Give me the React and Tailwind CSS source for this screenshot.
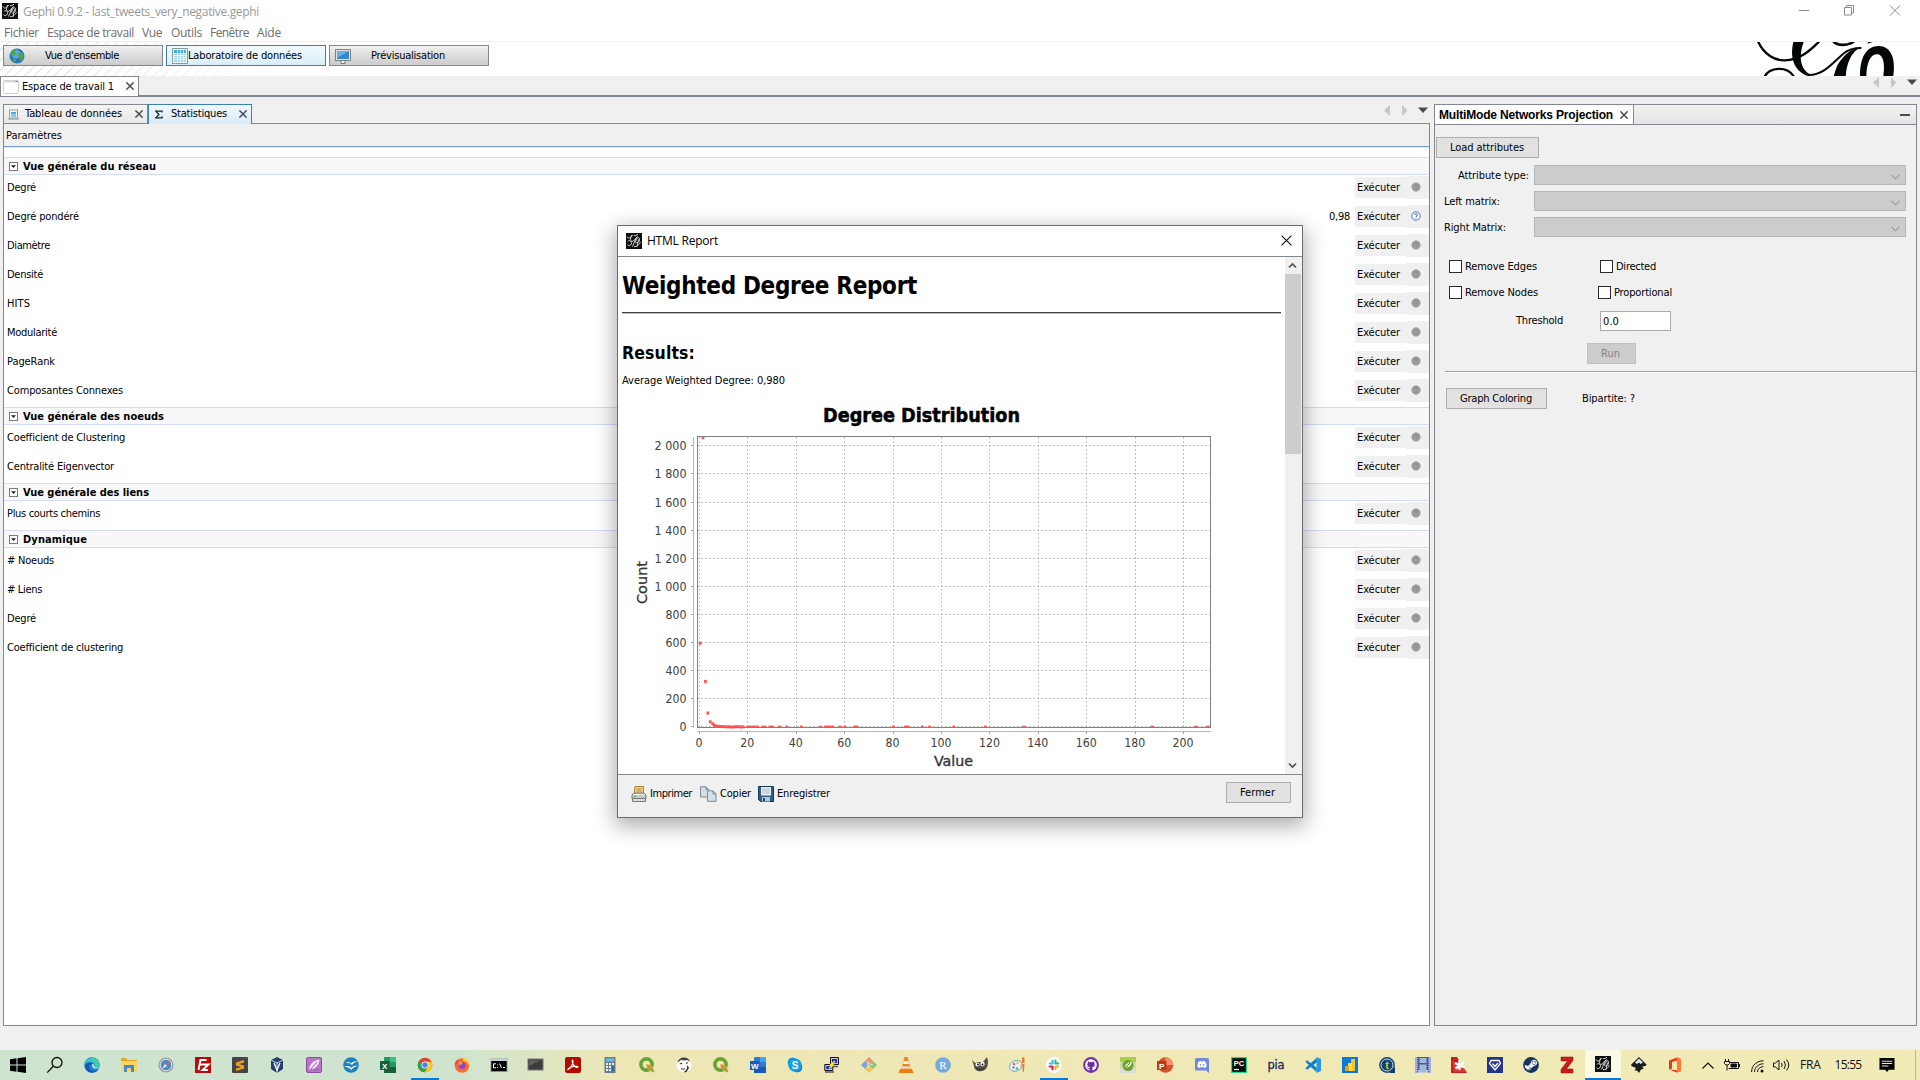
import React, { useLayoutEffect, useRef } from "react";
import { FaGithub, FaSteamSymbol, FaDiscord } from "react-icons/fa";

const TAHOMA = "font-['DejaVu_Sans_Condensed','DejaVu_Sans',sans-serif] [font-stretch:condensed]";
const SEGOE = "font-['Open_Sans',sans-serif] [font-stretch:normal]";

/* Single-line label spread evenly over a given width. */
function Label({ w, children, className = "" }) {
  const ref = useRef(null);
  useLayoutEffect(() => {
    const el = ref.current;
    const fit = () => {
      el.style.letterSpacing = "0px";
      const natural = el.getBoundingClientRect().width;
      el.style.letterSpacing = `${(w - natural) / children.length}px`;
    };
    fit();
    document.fonts?.ready.then(fit);
  }, [w, children]);
  return (
    <span ref={ref} className={`inline-block shrink-0 whitespace-pre ${className}`}>
      {children}
    </span>
  );
}

function GephiIcon({ size = 16 }) {
  return (
    <svg width={size} height={size} viewBox="0 0 16 16" className="shrink-0">
      <rect width="16" height="16" fill="#0d0f10" />
      <g fill="none" stroke="#e8e8e8" strokeWidth="0.9">
        <path d="M1 3.5C2 6 5 5.500 6.500 2M5.500 2C4 6 4.500 8.500 6 8.500 8 8.500 9 5 11.500 4M2 8.500C3 6.500 5 8 5.500 9.500 6 12 2.500 14 1.500 11.500" />
        <path d="M11.500 3.500C9 5 8.500 10 6.500 13.500M9.500 9C10.500 4 14 3.500 13.500 7 13 10 10.500 10.500 9.500 9.500M12.500 6.500L11 13.500M8 13.500C11 14.500 13.500 11 14.500 9M8 2.500C9.500 3.500 10.500 1.500 12 1.500" />
      </g>
    </svg>
  );
}

function Cross({ size = 8, color = "#4b4b4b", stroke = 1.5 }) {
  return (
    <svg width={size} height={size} viewBox="0 0 8 8" className="block shrink-0">
      <path d="M.4.4L7.600 7.600M7.600.4L.4 7.600" stroke={color} strokeWidth={(stroke * 8) / size} fill="none" />
    </svg>
  );
}

function TabArrows() {
  return (
    <svg width="44" height="11" viewBox="0 0 44 11" className="shrink-0">
      <path d="M6 0v11L0 5.500zM18 0v11l5.500-5.500z" fill="#c6c6c6" />
      <path d="M34 2.500h10l-5 5.500z" fill="#4b4b4b" />
    </svg>
  );
}

/* ---------- window header ---------- */
function WindowControls() {
  return (
    <svg width="102" height="11" viewBox="0 0 102 11" fill="none" stroke="#8a8a8a">
      <path d="M0 5.500h10M45.500 2.500h7v7.500h-7zM47.500 2.500V.5h7v7.500h-2M91 .5l10 10M101 .5l-10 10" />
    </svg>
  );
}

const MENU = [
  ["Fichier", 35, "ml-[4px]"],
  ["Espace de travail", 87, "ml-[8px]"],
  ["Vue", 20, "ml-[8px]"],
  ["Outils", 31, "ml-[9px]"],
  ["Fenêtre", 39, "ml-[8px]"],
  ["Aide", 24, "ml-[8px]"],
];

function Header() {
  return (
    <>
      <div className={`flex h-[22px] items-start justify-between bg-white pl-[2px] pr-[19px] text-[12px] text-[#999] ${SEGOE}`}>
        <div className="flex items-start pt-[3px]">
          <GephiIcon />
          <Label w={236} className="ml-[5px] mt-px leading-[16px]">Gephi 0.9.2 - last_tweets_very_negative.gephi</Label>
        </div>
        <div className="pt-[5px]">
          <WindowControls />
        </div>
      </div>
      <div className={`flex h-[20px] items-start border-b border-[#f0f0f0] bg-white pt-px text-[12px] leading-[20px] text-[#6d6d6d] ${SEGOE}`}>
        {MENU.map(([t, w, m]) => (
          <Label key={t} w={w} className={m}>{t}</Label>
        ))}
      </div>
    </>
  );
}

function Globe() {
  return (
    <svg width="16" height="16" viewBox="0 0 16 16" className="shrink-0">
      <circle cx="8" cy="8" r="7.500" fill="#2a78bd" />
      <circle cx="7" cy="6" r="4.500" fill="#5aa9de" />
      <path d="M2 4C4 1 7 .6 8 1L6 4 7 6 4.500 8 2 6zM9 6l4-2 2 4-2 5-2-1-.5-3L9 8zM4 9l3 1 0 2-2 3-1-2z" fill="#4fa24b" />
    </svg>
  );
}
function TableIcon() {
  return (
    <svg width="16" height="16" viewBox="0 0 16 16" className="shrink-0">
      <rect x=".5" y=".5" width="15" height="15" fill="#f3f7f8" stroke="#8c9a9d" />
      <rect x="2" y="2" width="12" height="12" fill="#9fd6ee" />
      <rect x="2" y="2" width="12" height="3" fill="#35b1e3" />
      <path d="M2 5.500h12M2 7.500h12M2 9.500h12M2 11.500h12M5.500 2v12M8.500 2v12M11.500 2v12" stroke="#fff" strokeWidth=".7" />
    </svg>
  );
}
function SmallTableIcon() {
  return (
    <svg width="11" height="11" viewBox="0 0 11 11" className="shrink-0">
      <rect x="1.500" y="1" width="8" height="8" fill="#f7f7f7" stroke="#9a9ea0" />
      <rect x="3" y="3" width="5" height="5" fill="#86c8e8" />
      <path d="M3 3h5v1.500H3z" fill="#3aa6dc" />
      <path d="M0 10h11" stroke="#8b8f92" />
    </svg>
  );
}
function MonitorIcon() {
  return (
    <svg width="16" height="16" viewBox="0 0 16 16" className="shrink-0">
      <rect x=".5" y="1.500" width="15" height="11" fill="#dfe3e6" stroke="#7d858b" />
      <rect x="2" y="3" width="12" height="8" fill="#3587cc" />
      <path d="M2 3h12L2 10z" fill="#68b0e6" />
      <path d="M6 13v2.500h4V13" fill="#eee" stroke="#777" />
    </svg>
  );
}

function GephiWordmark() {
  return (
    <svg width="180" height="34" viewBox="0 0 540 102" className="block shrink-0" fill="#040707">
      <g fill="none" stroke="#040707">
        <path d="M54 -2C72 38 105 56 134 55C180 54 212 24 238 -2" strokeWidth="7" />
        <path d="M74 104C88 76 140 70 162 104" strokeWidth="7" />
        <path d="M204 99C250 100 275 65 310 35C325 22 345 18 364 18" strokeWidth="6" />
        <path d="M280 -2C292 12 326 12 342 -2" strokeWidth="8" />
      </g>
      <path d="M160 0h31C172 52 186 88 214 98L204 102C158 86 150 42 160 0z" />
      <path d="M366 16C345 20 322 48 317 102H281C290 78 290 70 300 58C318 32 342 16 366 16z" />
      <path d="M360 102C360 48 378 12 416 12C452 12 468 48 460 102H430C436 60 428 36 410 37C388 38 380 70 379 102z" />
      <path d="M383 5L398 0H384z" />
    </svg>
  );
}

function Toolbar() {
  const base = "flex h-[21px] w-[160px] items-center border text-[11px] text-black";
  const grey = "border-[#828790] bg-linear-to-b from-[#f2f2f2] via-[#dcdcdc] to-[#cccccc]";
  return (
    <div className={`flex h-[34px] bg-white ${TAHOMA}`}>
      <div className="flex h-full w-[330px] shrink-0 items-start gap-[3px] bg-[linear-gradient(to_right,transparent,#fff),repeating-linear-gradient(135deg,#fff_0px,#fff_5.6px,#d2d2d2_6.3px,#fff_7px)] pl-[3px] pt-[3px]">
        <div className={`${base} ${grey} shrink-0 pl-[5px]`}>
          <Globe />
          <Label w={74} className="ml-[20px] pt-px">Vue d'ensemble</Label>
        </div>
        <div className={`${base} shrink-0 border-[#3c7fb1] bg-linear-to-b from-[#f2fafe] to-[#d9eef8] pl-[5px]`}>
          <TableIcon />
          <Label w={114} className="pt-px">Laboratoire de données</Label>
        </div>
        <div className={`${base} ${grey} shrink-0 pl-[5px]`}>
          <MonitorIcon />
          <Label w={74} className="ml-[20px] pt-px">Prévisualisation</Label>
        </div>
      </div>
      <div className="ml-auto">
        <GephiWordmark />
      </div>
    </div>
  );
}

function WorkspaceTabs() {
  return (
    <div className={`flex h-[21px] ${TAHOMA} text-[11px]`}>
      <div className="flex w-[139px] shrink-0 items-center border border-[#828790] bg-white pl-[2px]">
        <svg width="16" height="14" viewBox="0 0 16 14" className="shrink-0">
          <rect x=".5" y=".5" width="15" height="13" rx="1" fill="#fdfdfd" stroke="#cfcfcf" />
          <path d="M1 1h14v1.500H1z" fill="#ded9d7" />
          <path d="M12.500 1h2v1h-2z" fill="#c66" />
        </svg>
        <Label w={92} className="ml-[3px] pt-px">Espace de travail 1</Label>
        <span className="mb-px ml-[12px]"><Cross /></span>
      </div>
      <div className="flex flex-1 items-start justify-end border-b-2 border-[#828790] pr-[3px] pt-px">
        <TabArrows />
      </div>
    </div>
  );
}

/* ---------- statistics panel ---------- */
const SECTIONS = [
  {
    title: ["Vue générale du réseau", 133],
    rows: [["Degré", 29], ["Degré pondéré", 72, "0,98"], ["Diamètre", 43], ["Densité", 36], ["HITS", 23], ["Modularité", 50], ["PageRank", 48], ["Composantes Connexes", 116]],
  },
  { title: ["Vue générale des noeuds", 141], rows: [["Coefficient de Clustering", 118], ["Centralité Eigenvector", 107]] },
  { title: ["Vue générale des liens", 126], rows: [["Plus courts chemins", 93]] },
  { title: ["Dynamique", 64], rows: [["# Noeuds", 47], ["# Liens", 35], ["Degré", 29], ["Coefficient de clustering", 116]] },
];

function HelpDot({ active }) {
  return (
    <svg width="10" height="10" viewBox="0 0 10 10">
      <circle cx="5" cy="5" r="4.200" fill={active ? "#fff" : "#9c9c9c"} stroke={active ? "#4560d8" : "#9c9c9c"} strokeWidth={active ? 0.9 : 0.8} />
      <path d="M3.600 4C3.600 2.300 6.400 2.300 6.400 3.900 6.400 4.800 5 4.900 5 6M5 6.700V7.700" fill="none" stroke={active ? "#3550d0" : "#8c8c8c"} strokeWidth="1" />
    </svg>
  );
}

function StatSection({ title, rows }) {
  return (
    <section>
      <div className="flex h-[18px] items-center border-y border-[#d4dcf7] bg-[#f8f8f8] pl-[5px] text-[11px] font-bold">
        <svg width="9" height="9" viewBox="0 0 9 9" className="shrink-0">
          <rect x=".5" y=".5" width="8" height="8" fill="#fff" stroke="#7a7a7a" />
          <path d="M2 3.300h5L4.500 6z" fill="#222" />
        </svg>
        <Label w={title[1]} className="ml-[5px] pt-[2px] leading-[16px]">{title[0]}</Label>
      </div>
      {rows.map(([name, w, value], i) => (
        <div key={i} className="flex h-[29px] items-start pl-[3px] pt-px text-[11px] leading-[23px]">
          <Label w={w}>{name}</Label>
          <div className="ml-auto flex">
            {value && <Label w={21} className="mr-[5px]">{value}</Label>}
            <div className="mt-px h-[21px] w-[51px] bg-[#f0f0f0] pl-[2px] leading-[21px]">
              <Label w={43}>Exécuter</Label>
            </div>
            <div className="flex h-[23px] w-[23px] items-center bg-[#f0f0f0] pb-px pl-[5px]">
              <HelpDot active={!!value} />
            </div>
          </div>
        </div>
      ))}
    </section>
  );
}

function StatisticsPanel() {
  return (
    <div className={`ml-[3px] flex h-[922px] w-[1427px] shrink-0 flex-col text-[11px] ${TAHOMA}`}>
      <div className="flex h-[20px] shrink-0">
        <div className="flex w-[145px] items-center border border-[#828790] bg-linear-to-b from-[#f5f5f5] to-[#e8e8e8] pl-[4px]">
          <SmallTableIcon />
          <Label w={97} className="ml-[6px] pt-px">Tableau de données</Label>
          <span className="mb-px ml-[13px]"><Cross /></span>
        </div>
        <div className="flex w-[104px] items-center border border-b-0 border-[#3c7fb1] bg-linear-to-b from-[#f0f8ff] to-[#d9eafa] pl-[6px]">
          <svg width="8" height="9" viewBox="0 0 9 9" className="shrink-0">
            <path d="M8 2.300V.8H1L4.500 4.500 1 8.200H8V6.500" fill="none" stroke="#222" strokeWidth="1.400" />
          </svg>
          <Label w={56} className="ml-[8px]">Statistiques</Label>
          <span className="mb-[2px] ml-[12px]"><Cross /></span>
        </div>
        <div className="flex flex-1 items-start justify-end border-b border-[#828790] pr-[2px] pt-px">
          <TabArrows />
        </div>
      </div>
      <div className="flex flex-1 flex-col border border-t-0 border-[#828790] bg-white">
        <div className="h-[23px] border-b border-[#7a9dc2] bg-[#f0f0f0] pl-[2px] pt-px leading-[22px]">
          <Label w={56}>Paramètres</Label>
        </div>
        <div className="mb-[9px] h-px bg-[#e0e6f8]" />
        {SECTIONS.map((s) => (
          <StatSection key={s.title[0]} {...s} />
        ))}
      </div>
    </div>
  );
}

/* ---------- projection panel ---------- */
function Combo() {
  return (
    <div className="flex h-[20px] w-[372px] items-center justify-end border border-[#b4b4b4] bg-[#cccccc] pr-[5px]">
      <svg width="9" height="6" viewBox="0 0 9 6" className="mt-[3px]" fill="none" stroke="#a0a0a0" strokeWidth="1.200">
        <path d="M.5.7L4.500 4.900 8.500.7" />
      </svg>
    </div>
  );
}
function Check({ w, children }) {
  return (
    <div className="flex h-[13px] items-center leading-[13px]">
      <div className="size-[13px] shrink-0 border border-[#2b2b2b] bg-white" />
      <Label w={w} className="ml-[3px]">{children}</Label>
    </div>
  );
}
const BTN = "border border-[#adadad] bg-[#e1e1e1]";

function ProjectionPanel() {
  return (
    <div className={`ml-[4px] flex h-[922px] w-[483px] shrink-0 flex-col border border-[#828790] text-[11px] text-black ${TAHOMA}`}>
      <div className="flex h-[20px] border-b border-[#828790]">
        <div className="flex w-[199px] shrink-0 items-center border-r border-[#828790] bg-white pl-[4px] font-['Liberation_Sans',sans-serif] text-[12px] font-bold">
          <Label w={174} className="pt-px">MultiMode Networks Projection</Label>
          <span className="ml-[7px]"><Cross /></span>
        </div>
        <div className="flex flex-1 items-center justify-end bg-linear-to-b from-[#f3f3f3] to-[#e4e4e4] pr-[6px]">
          <div className="h-[2px] w-[10px] bg-[#4b4b4b]" />
        </div>
      </div>
      <div className={`ml-px mt-[12px] h-[21px] w-[103px] ${BTN} pl-[13px] leading-[19px]`}>
        <Label w={74}>Load attributes</Label>
      </div>
      <div className="mt-[7px] grid grid-cols-[90px_373px] grid-rows-[20px_20px_20px] gap-x-[9px] gap-y-[6px] leading-[20px]">
        <div className="pl-[23px] pt-px"><Label w={71}>Attribute type:</Label></div>
        <Combo />
        <div className="pl-[9px] pt-px"><Label w={56}>Left matrix:</Label></div>
        <Combo />
        <div className="pl-[9px] pt-px"><Label w={62}>Right Matrix:</Label></div>
        <Combo />
      </div>
      <div className="ml-[14px] mt-[23px] flex h-[13px]">
        <div className="w-[151px]"><Check w={72}>Remove Edges</Check></div>
        <Check w={40}>Directed</Check>
      </div>
      <div className="ml-[14px] mt-[13px] flex h-[13px]">
        <div className="w-[149px]"><Check w={73}>Remove Nodes</Check></div>
        <Check w={58}>Proportional</Check>
      </div>
      <div className="ml-[80px] mt-[12px] flex h-[20px] leading-[20px]">
        <div className="w-[85px] pl-px"><Label w={47}>Threshold</Label></div>
        <div className="w-[71px] border border-[#ababab] bg-white pl-[2px] leading-[19px]"><Label w={16}>0.0</Label></div>
      </div>
      <div className="ml-[152px] mt-[12px] h-[21px] w-[49px] border border-[#bfbfbf] bg-[#cccccc] pl-[13px] leading-[19px] text-[#838383]">
        <Label w={19}>Run</Label>
      </div>
      <div className="ml-[10px] mt-[7px] h-[2px] border-b border-t border-b-white border-t-[#a0a0a0]" />
      <div className="ml-[11px] mt-[15px] flex h-[21px]">
        <div className={`w-[101px] ${BTN} pl-[13px] leading-[19px]`}><Label w={72}>Graph Coloring</Label></div>
        <Label w={53} className="ml-[35px] leading-[21px]">Bipartite: ?</Label>
      </div>
    </div>
  );
}

/* ---------- report dialog ---------- */
const POINTS = [
  [0.3, 597], [1.4, 2060], [2.4, 325], [3.4, 100], [4.4, 38], [5.4, 24], [6, 13], [6.500, 8], [7, 6], [8, 5], [9, 4], [10, 4], [11, 2], [12, 2], [13, 1], [14, 1], [15, 3], [16, 3], [17, 1], [18, 2],
  20, 21, 22, 23, 24, 26, 27, 29, 30, 33, 36, 42, 50, 52, 53, 54, 55, 58, 60, 64, 65, 80, 85, 86, 92, 95, 105, 118, 134, 187, 205, 210,
];

function DegreeChart() {
  const px = (v) => 79.400 + v * 2.421;
  const py = (v) => 326.800 - v * 0.1405;
  const col = (v) => Math.floor(px(v)) + 0.5;
  const row = (v) => Math.floor(py(v)) + 0.5;
  const xs = Array.from({ length: 11 }, (_, i) => i * 20);
  const ys = Array.from({ length: 11 }, (_, i) => i * 200);
  const fmt = (v) => (v >= 1000 ? `${Math.floor(v / 1000)} ${String(v % 1000).padStart(3, "0")}` : `${v}`);
  return (
    <svg width="660" height="376" viewBox="0 0 660 376" className={`block ${TAHOMA}`}>
      <text x="203" y="21.500" textLength="197" fontSize="20" fontWeight="700" stroke="#000" strokeWidth=".5" lengthAdjust="spacingAndGlyphs">Degree Distribution</text>
      <g stroke="#c0c0c0" strokeDasharray="2 2" shapeRendering="crispEdges">
        {ys.map((v) => <path key={v} d={`M77 ${row(v)}H590`} />)}
        {xs.map((v) => <path key={v} d={`M${col(v)} 37V328`} />)}
      </g>
      <g fill="#ff5555">
        {POINTS.map((p, i) => {
          const [x, y] = Array.isArray(p) ? p : [p, 0];
          return <rect key={i} x={px(x) - 1.200} y={py(y) - 1.200} width="2.800" height={y > 0 ? 3 : 2} />;
        })}
      </g>
      <rect x="77.500" y="36.500" width="513" height="291" fill="none" stroke="#808080" />
      <path d="M73.500 37V328M77 331.500H591" stroke="#b8b8b8" />
      <g stroke="#a0a0a0">
        {ys.map((v) => <path key={v} d={`M71 ${row(v)}h2`} />)}
        {xs.map((v) => <path key={v} d={`M${col(v)} 332v2`} />)}
      </g>
      <g fontSize="12.500" fill="#404040">
        {ys.map((v) => (
          <text key={v} x="66.500" y={row(v) + 4.500} textAnchor="end" textLength={v >= 1000 ? 32 : v ? 21 : 7} lengthAdjust="spacingAndGlyphs">{fmt(v)}</text>
        ))}
        {xs.map((v) => (
          <text key={v} x={px(v) - 0.5} y="347" textAnchor="middle" textLength={v >= 100 ? 21 : v ? 14 : 7} lengthAdjust="spacingAndGlyphs">{v}</text>
        ))}
      </g>
      <g fontSize="14.500" fill="#333" stroke="#333" strokeWidth=".3">
        <text x="314" y="366" textLength="39" lengthAdjust="spacingAndGlyphs">Value</text>
        <text transform="translate(27 204) rotate(-90)" textLength="43" lengthAdjust="spacingAndGlyphs">Count</text>
      </g>
    </svg>
  );
}

function PrintIcon() {
  return (
    <svg width="16" height="16" viewBox="0 0 16 16" className="shrink-0">
      <path d="M4 .5h8.500v8H3z" fill="#f2cf7a" stroke="#a8823a" />
      <path d="M5.500 3h5M5.500 5h5" stroke="#a8823a" strokeWidth=".8" />
      <path d="M1 9l2-2h10l2 2v3.500H1z" fill="#c9c9c9" stroke="#777" />
      <path d="M2 8.500h12" stroke="#efefef" />
      <path d="M1.500 12.500h13v3h-13z" fill="#dcdcdc" stroke="#777" />
      <path d="M3 10.500h2" stroke="#4db24d" />
    </svg>
  );
}
function CopyIcon() {
  return (
    <svg width="17" height="16" viewBox="0 0 17 16" className="shrink-0" fill="#d5dfe8" stroke="#7b8b99">
      <path d="M.5.8h5.500L8.500 3.500V11H.5z" />
      <path d="M7.500 4.800h5.500l3 3v7.500H7.500z" />
      <path d="M13 5v3h3M6 1v2.500h2.500" fill="none" />
    </svg>
  );
}
function SaveIcon() {
  return (
    <svg width="16" height="16" viewBox="0 0 16 16" className="shrink-0">
      <path d="M.5.5h15v15h-13l-2-2z" fill="#2f5f89" stroke="#17364f" />
      <rect x="3" y="1" width="10" height="8.500" fill="#e9eef2" />
      <path d="M4 3h8M4 5h8M4 7h8" stroke="#9fb0bd" strokeWidth=".8" />
      <rect x="4" y="11" width="8" height="4.500" fill="#b9c7d2" />
      <rect x="5" y="12" width="2" height="3" fill="#23445f" />
    </svg>
  );
}

function ReportDialog() {
  return (
    <div className={`absolute left-[617px] top-[225px] flex h-[593px] w-[686px] flex-col border border-[#6b6b70] bg-[#f0f0f0] text-black shadow-[0_6px_20px_2px_rgba(0,0,0,0.33)] ${TAHOMA}`}>
      <div className={`flex h-[30px] shrink-0 items-center bg-white pb-px pl-[8px] pr-[10px] text-[12px] ${SEGOE}`}>
        <GephiIcon />
        <Label w={71} className="ml-[5px] pt-px">HTML Report</Label>
        <span className="mb-px ml-auto"><Cross size={11} color="#111" stroke={1.1} /></span>
      </div>
      <div className="flex h-[519px] shrink-0 border-y border-[#828790] bg-white">
        <div className="h-[517px] flex-1 pl-[4px]">
          <div className="h-[55px] pt-[14px] text-[24px] font-bold leading-[30px]"><Label w={295}>Weighted Degree Report</Label></div>
          <div className="h-[2px] w-[659px] border-b border-t border-b-[#bdbdbd] border-t-[#404040]" />
          <div className="mt-[27px] h-[25px] text-[17.500px] font-bold leading-[24px]"><Label w={73}>Results:</Label></div>
          <div className="mt-[7px] h-[15px] text-[11px] leading-[16px]"><Label w={163}>Average Weighted Degree: 0,980</Label></div>
          <div className="-ml-[2px] mt-[12px]"><DegreeChart /></div>
        </div>
        <div className="flex w-[17px] shrink-0 flex-col bg-[#f0f0f0] pb-[5px]">
          <svg width="9" height="17" viewBox="0 0 9 17" className="ml-[3px]" fill="none" stroke="#505050" strokeWidth="1.700"><path d="M1 10.500L4.500 7 8 10.500" /></svg>
          <div className="h-[180px] w-[16px] bg-[#cdcdcd]" />
          <svg width="9" height="7" viewBox="0 0 9 7" className="ml-[3px] mt-auto" fill="none" stroke="#505050" strokeWidth="1.700"><path d="M1 1.500L4.500 5 8 1.500" /></svg>
        </div>
      </div>
      <div className="flex h-[42px] items-center pb-[5px] pl-[13px] pr-[11px] text-[11px]">
        <PrintIcon />
        <Label w={42} className="ml-[3px] pt-px">Imprimer</Label>
        <span className="ml-[8px] flex"><CopyIcon /></span>
        <Label w={31} className="ml-[3px] pt-px">Copier</Label>
        <span className="ml-[7px] flex"><SaveIcon /></span>
        <Label w={53} className="ml-[3px] pt-px">Enregistrer</Label>
        <div className={`mb-[3px] ml-auto h-[21px] w-[65px] ${BTN} pl-[13px] leading-[19px]`}><Label w={35}>Fermer</Label></div>
      </div>
    </div>
  );
}

/* ---------- taskbar ---------- */
function Glyph({ x = 8, y = 12, size = 10, fill = "#fff", children, bold = true }) {
  return (
    <text x={x} y={y} fontSize={size} fill={fill} textAnchor="middle" fontWeight={bold ? 700 : 400} fontFamily="Liberation Sans, sans-serif">
      {children}
    </text>
  );
}
const qgis = (
  <>
    <circle cx="7.500" cy="7.500" r="5.600" fill="none" stroke="#68a336" strokeWidth="3.600" />
    <path d="M7 7l3 .2L15.500 13l-2.500 2.500L7.500 10z" fill="#eb7f33" stroke="#f4eeb6" strokeWidth=".5" />
    <path d="M11 11l4 4" stroke="#7db343" strokeWidth="1.500" />
  </>
);
const officeTile = (dark, mid, light, letter) => (
  <>
    <rect x="4" y="0" width="12" height="16" rx="1" fill={mid} />
    <rect x="10" y="0" width="6" height="5" fill={light} />
    <rect x="4" y="10" width="12" height="6" fill={dark} />
    <rect x="0" y="4" width="9.500" height="9" fill={dark} />
    <Glyph x={4.700} y={11.500} size={8}>{letter}</Glyph>
  </>
);

const APPS = [
  ["start", <path d="M0 2.200L6.500 1.300V7.500H0zM7.500 1.200L16 0V7.500H7.500zM0 8.500H6.500V14.700L0 13.800zM7.500 8.500H16V16L7.500 14.800z" fill="#000" />],
  ["search", <g fill="none" stroke="#111" strokeWidth="1.300"><circle cx="10" cy="5.500" r="5" /><path d="M6.300 9.200L.2 15.600" /></g>],
  ["edge", <><circle cx="8" cy="8" r="7.800" fill="#1b83d2" /><path d="M.5 7C2 0 14-2 15.800 7c0 4-5 4-5.300 2.500C12 5 5 3 .5 7z" fill="#3fcbb0" /><path d="M5 9c0 5 5 6 9 4-4 5-13 2.500-13-4C3 5 8 5 8 7 6 7 5 8 5 9z" fill="#1458a8" /><path d="M8 7c3 0 2 2.500 2.500 3 2 1 4 .5 5-1-.5 3-6 3.500-7 1z" fill="#d2e4cc" /></>],
  ["files", <><path d="M0 1h5l1.500 2H16v11H0z" fill="#e5a61e" /><path d="M0 4h16v10H0z" fill="#fcd462" /><path d="M3 15V8h10v7h-3v-4H6v4z" fill="#3d8dd6" /></>],
  ["safari", <><circle cx="8" cy="8" r="7.500" fill="#9a9da0" /><circle cx="8" cy="8" r="5.800" fill="#4c8cc8" stroke="#dfe7ee" /><path d="M12 4L9 9 7 7z" fill="#e55" /><path d="M4 12l3-5 2 2z" fill="#eee" /></>],
  ["filezilla", <><rect width="16" height="16" fill="#b50d0d" /><path d="M3.500 13L5.500 3H11.500M4.500 7.500H8.500M7.500 7.500H13.500L7.500 13H13" fill="none" stroke="#fff" strokeWidth="1.900" /></>],
  ["sublime", <><rect width="16" height="16" rx="1" fill="#454545" /><path d="M12 3L4 5.500v3l5 1.500-5 1.500V14l8-2.500v-3L7 7l5-1.500z" fill="#f79b1c" /></>],
  ["virtualbox", <><path d="M8 0l6 3v9l-6 4-6-4V3z" fill="#23406b" /><path d="M2 3l6 3 6-3M8 6v10" stroke="#c9dbe9" fill="none" /><path d="M5 6l3 7 3-7" stroke="#fff" fill="none" strokeWidth="1.300" /></>],
  ["quill", <><rect x=".5" y=".5" width="15" height="15" rx="1.500" fill="#b477c4" stroke="#8c4c9e" /><path d="M3 14C3 8 7 3 13.500 2.500 13 8 9 12.500 5 12z" fill="#f3e5f6" /><path d="M3 14L11 5M8 13.500l5-1" stroke="#9a55ab" /></>],
  ["openoffice", <><circle cx="8" cy="8" r="7.800" fill="#1c83bd" /><path d="M2 6c3-2 5-1 6 .5C10 4.500 12 4 14.500 5 12 5 10 6 9 8 7 6 5 5.500 2 6zM1 10c4-2 6-1 7 1 2-2 4-2.500 7-2-3 .6-5 1.600-7 4-1-2.500-4-3.500-7-3z" fill="#fff" /></>],
  ["excel", officeTile("#17603a", "#219a60", "#38c481", "X")],
  ["chrome", <><circle cx="8" cy="8" r="7.300" fill="#e34133" /><path d="M8 8L1.600 4.500A7.300 7.300 0 0 0 7.500 15.300L11 9.500z" fill="#2da24f" /><path d="M8 8l3.500 1.500L7.500 15.300A7.300 7.300 0 0 0 14.500 4.700H8z" fill="#fbc915" /><circle cx="8" cy="8" r="3.500" fill="#fff" /><circle cx="8" cy="8" r="2.700" fill="#4285f4" /></>],
  ["firefox", <><circle cx="8" cy="8.500" r="7.300" fill="#fb6b2b" /><path d="M9 0c3 1 7 4 6.300 9.500C14 5 11 4 9 4z" fill="#ffd53b" /><path d="M.7 8C1 4 3 3 4 3l1 3z" fill="#ff3a52" /><circle cx="8" cy="8.500" r="3.500" fill="#8a46d0" /><path d="M4 5l5 .5-1.500 2L5 8z" fill="#ffa62b" /></>],
  ["cmd", <><rect y="2" width="16" height="12.500" fill="#000" stroke="#8b959e" strokeWidth=".8" /><path d="M0 2h16v2H0z" fill="#c5ced6" /><path d="M5 6.800H2.500v4H5M6.700 7.500v1M6.700 10v1M8.500 6.500l2 4.500M12 10.500h2" stroke="#fff" fill="none" /></>],
  ["terminal", <><rect y="2" width="15" height="11" fill="#3c3c3e" stroke="#777" /><path d="M1 3h13L1 9z" fill="#555" /><path d="M2 5h4M2 7h2" stroke="#999" strokeWidth=".6" /></>],
  ["acrobat", <><rect width="16" height="16" rx="2" fill="#b30b00" /><path d="M3 12.500C6 11 8 7 8 4.500 8 2 6.500 3 7.500 6c1 2.500 3 4.500 5 4.500 2-1-2-2-6-.5-3 1-4.500 3-3.500 2.500z" stroke="#fff" strokeWidth="1.100" fill="none" /></>],
  ["calculator", <><rect x="2.500" width="11" height="16" fill="#6e7c85" /><rect x="4" y="1.500" width="8" height="3" fill="#5fc4ea" /><path d="M4 7h2M7 7h2M10 7h2M4 10h2M7 10h2M4 13h2M7 13h2" stroke="#e9eef1" strokeWidth="1.800" /><path d="M10 9h2v5h-2z" fill="#1f6fb0" /></>],
  ["qgis", qgis],
  ["dbeaver", <><circle cx="8" cy="8" r="7.500" fill="#fbfaf6" /><path d="M1.500 5.500C2 2.500 5 .5 8 .5S13 2 14 4.500L11 3 8.500 3.500 5 3z" fill="#4a413b" /><path d="M3.500 6.500l2-.8 1 .8-1.500 1zM9.500 6l2-.8.8.8-1.500.8zM11.500 8l1.500 3-2.500 4-3 .4 3-2.900z" fill="#3a322d" /><path d="M5 11.500c1.500 1 3 1 4 0" fill="none" stroke="#3a322d" /></>],
  ["qgis-2", qgis],
  ["word", officeTile("#185abd", "#2b7cd3", "#41a5ee", "W")],
  ["skype", <><rect x=".8" y=".8" width="10" height="10" rx="4.500" fill="#1592df" /><rect x="5.200" y="5.200" width="10" height="10" rx="4.500" fill="#0f7fd0" /><circle cx="8" cy="8" r="6.600" fill="#169fe6" /><Glyph y={11.500}>S</Glyph></>],
  ["putty", <><path d="M6.500.5h8v7h-8zM.8 7.500h8v6h-8z" fill="#c9c9c9" stroke="#111" /><path d="M8 2h5v4H8zM2.300 9h5v3h-5z" fill="#1b28b8" /><path d="M8 9.500h6M1 15h9" stroke="#555" strokeWidth="1.500" /><path d="M11 4L7 7.500l2 .5-4 3.500" stroke="#ffe81a" fill="none" strokeWidth="1.600" /></>],
  ["slicer", <g opacity=".9"><path d="M8 0l4 4-4 4-4-4z" fill="#e98a6d" /><path d="M4 4l4 4-4 4-4-4z" fill="#6f9fe0" /><path d="M12 4l4 4-4 4-4-4z" fill="#7cbd70" /><path d="M8 8l4 4-4 4-4-4z" fill="#f3c24f" /><path d="M7 4v7M8.500 6.500L12 8.500" stroke="#f7f3e0" /></g>],
  ["vlc", <><path d="M2 12h12l1.500 4H.5z" fill="#ee7a12" /><path d="M6.500 0h3L13 13H3z" fill="#f58220" /><path d="M5.700 4h4.600l.8 3H4.900zM4.200 9.500h7.600l.5 2H3.700z" fill="#f4f4f0" /></>],
  ["r", <><circle cx="8" cy="8" r="7.800" fill="#75aadb" /><text x="8" y="12" fontSize="11" fill="#fff" textAnchor="middle" fontFamily="Liberation Serif, serif">R</text></>],
  ["gimp", <><path d="M0 3l3 3c3-2 6 0 8-1l4-5 1 4c0 5-1 9-6 10-4 1-8-1-8-5z" fill="#56524a" /><circle cx="5.500" cy="7.500" r="2" fill="#fff" /><circle cx="10.500" cy="7" r="2.200" fill="#fff" /><circle cx="6" cy="7.500" r=".9" /><circle cx="10.500" cy="7.500" r=".9" /><path d="M4 11c3 2 6 2 8 0" stroke="#222" fill="none" /></>],
  ["paint", <><path d="M1 8c1-4 8-6 11-3 2 2-1 3 0 5s-4 5-8 4-4-4-3-6z" fill="#e8f1f6" stroke="#6aa0bf" /><circle cx="5" cy="7" r="1.200" fill="#e55" /><circle cx="8.500" cy="6" r="1.200" fill="#f5b82e" /><circle cx="4.500" cy="10.500" r="1.200" fill="#3a9bdc" /><circle cx="8" cy="11.500" r="1.200" fill="#55b24b" /><path d="M13 6V1l1-1 1.500 1v5zM13 7h2.500l-.7 8h-1z" fill="#e57f2a" /></>],
  ["slack", <><circle cx="8" cy="8" r="7.900" fill="#fff" /><g strokeWidth="2.200" strokeLinecap="round"><path d="M6.500 3.500v3M3.700 6.500h2.500" stroke="#36c5f0" /><path d="M9.500 3.700v2.800M9.500 6.500H12.300" stroke="#2eb67d" /><path d="M9.500 9.500v2.800M9.500 9.500H12.300" stroke="#ecb22e" /><path d="M3.700 9.500h2.800M6.500 9.500V12.300" stroke="#e01e5a" /></g></>],
  ["github", <><circle cx="8" cy="8" r="7.900" fill="#6f2da8" /><FaGithub x="2" y="2" size={12} color="#fff" /></>],
  ["camtasia", <><rect width="16" height="16" fill="#c9dba9" /><rect width="16" height="5" fill="#a8cf45" /><rect y="11" width="16" height="5" fill="#dcdcd8" /><circle cx="8" cy="8.500" r="5.500" fill="#6fa030" /><path d="M5 10c0-3.500 4-4.500 7-5.500-1 6-4 6.500-7 5.500z" fill="#dff0bd" /><path d="M6 10l4-4" stroke="#5c8a26" /></>],
  ["powerpoint", <><circle cx="8.500" cy="8" r="7.700" fill="#d35230" /><path d="M8.500.3a7.700 7.700 0 0 1 7.700 7.700H8.500z" fill="#ff8f6b" /><rect y="4" width="9.500" height="9" fill="#b83b1d" /><Glyph x={4.700} y={11.500} size={8}>P</Glyph></>],
  ["discord", <><path d="M1 2.500Q1 1 3 1h10q2 0 2 1.500V16l-3-2.500H3q-2 0-2-1.500z" fill="#7289da" /><FaDiscord x="3" y="2.500" size={10} color="#fff" /></>],
  ["pycharm", <><rect x=".6" y=".6" width="14.800" height="14.800" fill="#0b0b0b" stroke="#21d789" strokeWidth="1.200" /><Glyph x={8} y={8.500} size={7.500}>PC</Glyph><path d="M3 12.500h5" stroke="#fff" strokeWidth="1.200" /></>],
  ["pia", <text x="8" y="12" fontSize="11.500" textAnchor="middle" fill="#25285e" stroke="#25285e" strokeWidth=".3" fontFamily="DejaVu Sans, sans-serif" textLength="17">pia</text>],
  ["vscode", <><path d="M11.500 0L16 2v12l-4.500 2z" fill="#1f9cf0" /><path d="M11.500 1v4.500L2 12.800.3 11.200z" fill="#0b7bc4" /><path d="M11.500 15v-4.500L2 3.200.3 4.800z" fill="#0d82cf" /></>],
  ["powerbi", <><rect width="16" height="16" fill="#0f78d4" /><path d="M9 2h4v12H9z" fill="#f5c52c" /><path d="M6 6h4v8H6z" fill="#f9d859" /><path d="M3 9h4v5H3z" fill="#e0a71a" /></>],
  ["t-app", <><circle cx="8" cy="8" r="7.900" fill="#123f72" /><path d="M10 16h6v-6z" fill="#123f72" /><circle cx="8" cy="8" r="6" fill="none" stroke="#fff" strokeWidth=".8" /><Glyph y={12} size={11} fill="#b9d53a">t</Glyph></>],
  ["film", <><path d="M0 0h4v16H0zM12 0h4v16h-4z" fill="#a9a9ea" /><path d="M3 0h10v13H3z" fill="#4c5d84" /><path d="M4.500 1h7v5h-7zM4.500 7.500h7v8h-7z" fill="#9fb9dc" /><path d="M2.500 0v16M13.500 0v16" stroke="#5a5f88" strokeDasharray="1 1" /></>],
  ["asterisk", <><path d="M0 0h6l10 16H0z" fill="#c42020" /><path d="M1 3l15 12H3z" fill="#d93838" /><path d="M8.500 3v10M4 6l9 4.500M13 5.500L4.500 11.500" stroke="#fff" strokeWidth="2.300" /></>],
  ["vpn", <><rect width="16" height="16" fill="#22358a" /><path d="M4 3.500h8l1.500 3L8 13 2.500 6.500zM5.500 6.500L8 9.500l3-3.500" fill="none" stroke="#fff" strokeWidth="1.300" /></>],
  ["steam", <><circle cx="8" cy="8" r="7.900" fill="#17355f" /><FaSteamSymbol x="1" y="1" size={14} color="#f3f5f7" /></>],
  ["zotero", <path d="M2 0h12v3.500L7.500 12H14v4H2v-3.500L8.500 4H2z" fill="#c81a20" stroke="#8d1216" strokeWidth=".5" />],
  ["gephi", null],
  ["inkscape", <><path d="M8 0L15.500 7.500C16 9 12 9 11 10l2 1.500-3 1L8 16l-2-2.500H3.500L5 11 .3 9V7.500z" fill="#1c1c1e" /><path d="M8 1.500L12 5.500 9.500 7 8 5.500 6 7 4 5.500z" fill="#d9e3ee" /></>],
  ["office", <><path d="M2 3.500L10 .5 14 2v12l-4 1.500L2 12.500l8 .7V3.500L5 5v6.500L2 12.500z" fill="#e23c17" /><path d="M10 .5L14 2v12l-4 1.500z" fill="#ff7a33" /></>],
];
const RUNNING = { chrome: "border-b-2 border-[#0a78d6]", slack: "border-b-2 border-[#0a78d6]" };

function Taskbar() {
  return (
    <div className="flex h-[30px] items-center bg-linear-to-r from-[#cfe4ce] from-24% via-[#ece7b5] via-32% to-[#f1ebb6]">
      {APPS.map(([name, art], i) => (
        <div
          key={name}
          className={`flex h-[30px] shrink-0 items-center justify-center ${i > 0 && i < 38 ? "w-[37px]" : "w-[36px]"} ${name === "gephi" ? "border-b-2 border-[#0a78d6] bg-[#fbf9e6] pt-[2px]" : ""}`}
        >
          <div className={`flex h-[30px] items-center justify-center ${name === "gephi" ? "w-full pb-[2px]" : "w-[28px]"} ${RUNNING[name] ? RUNNING[name] + " pt-[2px]" : ""}`}>
            {art ? <svg width="16" height="16" viewBox="0 0 16 16" overflow="visible">{art}</svg> : <GephiIcon />}
          </div>
        </div>
      ))}
      <div className={`ml-[9px] flex h-full flex-1 items-center text-[12px] text-[#111] ${SEGOE}`}>
        <svg width="12" height="7" viewBox="0 0 12 7" fill="none" stroke="#111" strokeWidth="1.200" className="shrink-0"><path d="M.5 6.500L6 1l5.500 5.500" /></svg>
        <svg width="16" height="12" viewBox="0 0 16 12" className="ml-[10px] shrink-0" fill="none" stroke="#111"><path d="M5 3.500h9.500v6H4.500M15.500 5v3M1.500 0v2.500M4.500 0v2.500M.5 2.500h5v2L4 6H2L.5 4.500zM3 6v5.500" /><path d="M7 5h5.500v3H7z" fill="#111" /></svg>
        <svg width="13" height="13" viewBox="0 0 13 13" className="ml-[11px] mt-[2px] shrink-0" fill="none" stroke="#111"><path d="M.6 12C.6 5 6 .8 12.500.8M3.500 12C3.500 7 8 3.800 12.500 3.800M6.500 12C6.500 9 9 6.700 12.500 6.700" /><circle cx="11" cy="11" r="1.500" fill="#111" stroke="none" /></svg>
        <svg width="17" height="14" viewBox="0 0 17 14" className="ml-[9px] shrink-0" fill="none" stroke="#111"><path d="M.5 5h2L6 2v10L2.500 9h-2zM8.500 5q1.500 2 0 4M11 3q3 4 0 8M13.500 1.500q4.500 5.500 0 11" /></svg>
        <Label w={20.500} className="ml-[10px]">FRA</Label>
        <Label w={27} className="ml-[14px]">15:55</Label>
        <svg width="16" height="16" viewBox="0 0 17 16" className="ml-[17px] shrink-0"><path d="M.5.5h16V13h-6L8.500 15.500 6.500 13h-6z" fill="#000" /><path d="M3 4h11M3 6.500h11M3 9h7" stroke="#f1ebb6" strokeWidth="1.100" /></svg>
        <div className="ml-auto mr-[4px] h-full w-px bg-[#bdb88f]" />
      </div>
    </div>
  );
}

export default function App() {
  return (
    <div className="relative flex h-[1080px] w-[1920px] flex-col overflow-hidden bg-[#f0f0f0] text-black">
      <Header />
      <Toolbar />
      <WorkspaceTabs />
      <div className="flex h-[953px] pt-[7px]">
        <StatisticsPanel />
        <ProjectionPanel />
      </div>
      <Taskbar />
      <ReportDialog />
    </div>
  );
}
